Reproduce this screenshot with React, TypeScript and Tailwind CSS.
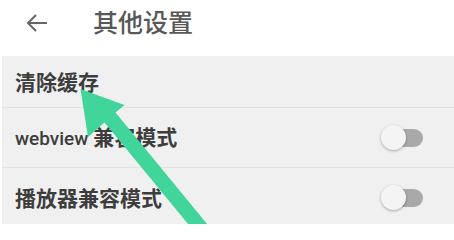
const font = { fontFamily: '"Noto Sans CJK SC", "Noto Sans", sans-serif' };

function Toggle() {
  return (
    <div className="relative h-[26px] w-[42px] shrink-0">
      <div className="absolute right-0 top-[4px] h-[18px] w-[34px] rounded-full bg-[#a9a9a9]" />
      <div className="absolute left-0 top-0 h-[25px] w-[25px] rounded-full bg-[#f4f4f4] shadow-[0_1px_3px_rgba(0,0,0,0.3)]" />
    </div>
  );
}

function Row({ children, toggle, h }: { children: React.ReactNode; toggle?: boolean; h: string }) {
  return (
    <div className={`flex items-center justify-between pl-[13px] pr-[31px] ${h}`}>
      <span className="text-[21px] font-bold text-[#3d3d3d]">{children}</span>
      {toggle && <Toggle />}
    </div>
  );
}

export default function App() {
  return (
    <div className="relative h-[224px] w-[454px] overflow-hidden bg-white" style={font}>
      <div className="flex h-[56px] items-center gap-[45px] pl-[26px]">
        <svg width="22" height="18" viewBox="0 0 22 18" className="mt-[-10px]">
          <path d="M21 9H2M10 1L2 9l8 8" fill="none" stroke="#666" strokeWidth="2" />
        </svg>
        <span className="mt-[-12px] text-[25px] font-medium text-[#585858]">其他设置</span>
      </div>
      <div className="ml-[2px] bg-[#f0f0f0]">
        <Row h="h-[51px]">清除缓存</Row>
        <div className="h-px bg-[#e2e2e2]" />
        <Row toggle h="h-[59px]">
          <span className="font-['Roboto',sans-serif] text-[19px] font-medium">webview</span> 兼容模式
        </Row>
        <div className="h-px bg-[#e2e2e2]" />
        <Row toggle h="h-[60px]">播放器兼容模式</Row>
      </div>
      <svg className="absolute left-0 top-0" width="454" height="224" viewBox="0 0 454 224">
        <polygon
          points="80.5,89 88,137 104.5,122.5 193,230 212,230 115.5,112.5 124.5,105"
          fill="#42d59b"
        />
      </svg>
    </div>
  );
}
